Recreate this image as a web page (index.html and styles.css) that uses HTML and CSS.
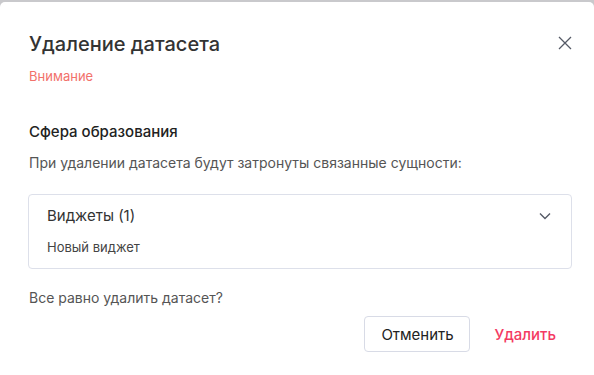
FILE: index.html
```html
<!DOCTYPE html>
<html lang="ru">
  <head>
    <meta charset="UTF-8" />
    <meta name="viewport" content="width=device-width, initial-scale=1.0" />
    <title>Удаление датасета</title>
    <link rel="stylesheet" href="styles.css">
  </head>
  <body>
    <div class="modal">
      <div class="modal-header">
        <div>
          <h1>Удаление датасета</h1>
          <p class="warning">Внимание</p>
        </div>
        <button class="close" aria-label="Закрыть">
          <svg width="14" height="14" viewBox="0 0 14 14">
            <path d="M1 1L13 13M13 1L1 13" stroke="#555a66" stroke-width="1.3" fill="none" />
          </svg>
        </button>
      </div>

      <h2>Сфера образования</h2>
      <p class="text">При удалении датасета будут затронуты связанные сущности:</p>

      <div class="group">
        <div class="group-head">
          <span>Виджеты (1)</span>
          <svg width="12" height="8" viewBox="0 0 12 8">
            <path d="M1 1.5L6 6.5L11 1.5" stroke="#555a66" stroke-width="1.4" fill="none" />
          </svg>
        </div>
        <div class="group-item">Новый виджет</div>
      </div>

      <p class="text question">Все равно удалить датасет?</p>

      <div class="actions">
        <button class="btn btn-cancel">Отменить</button>
        <button class="btn btn-delete">Удалить</button>
      </div>
    </div>
  </body>
</html>
```

FILE: styles.css
```css
* {
  box-sizing: border-box;
  margin: 0;
  padding: 0;
  font-family: Inter, "Noto Sans", Arial, sans-serif;
}

body {
  background: #c9c9cc;
  padding-top: 2px;
  height: 375px;
  overflow: hidden;
}

.modal {
  background: #fff;
  border-radius: 5px 5px 0 0;
  height: 373px;
  padding: 28px 22px 0 29px;
}

.modal-header {
  display: flex;
  justify-content: space-between;
  align-items: flex-start;
}

h1 {
  font-size: 20px;
  font-weight: 500;
  color: #333;
  line-height: 28px;
}

.warning {
  margin-top: 10px;
  font-size: 13px;
  color: #f2716b;
  line-height: 16px;
}

.close {
  background: none;
  border: none;
  margin-top: 6px;
  cursor: pointer;
}

h2 {
  margin-top: 38px;
  font-size: 15px;
  font-weight: 500;
  color: #222;
  line-height: 20px;
}

.text {
  margin-top: 11px;
  font-size: 14px;
  color: #555;
  line-height: 20px;
}

.group {
  margin-top: 21px;
  margin-left: -1px;
  width: 544px;
  border: 1px solid #dde0ea;
  border-radius: 4px;
  padding: 10px 20px 12px 18px;
}

.group-head {
  display: flex;
  justify-content: space-between;
  align-items: center;
  font-size: 15px;
  color: #333;
  line-height: 22px;
}

.group-item {
  margin-top: 11px;
  font-size: 13px;
  color: #444;
  line-height: 18px;
}

.question {
  margin-top: 19px;
}

.actions {
  display: flex;
  justify-content: flex-end;
  align-items: center;
  gap: 4px;
  margin-top: 8px;
}

.btn {
  font-size: 15px;
  height: 36px;
  border-radius: 4px;
  cursor: pointer;
  background: #fff;
}

.btn-cancel {
  border: 1px solid #d8dbe6;
  color: #222;
  padding: 0 16px;
  width: 106px;
}

.btn-delete {
  border: none;
  color: #f43a62;
  font-weight: 500;
  padding: 0 16px 0 20px;
}
```
